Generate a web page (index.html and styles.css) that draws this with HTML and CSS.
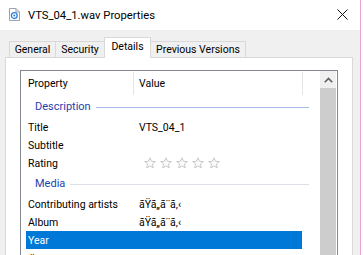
FILE: index.html
```html
<!DOCTYPE html>
<html>
<head>
<meta charset="utf-8">
<link rel="stylesheet" href="styles.css">
</head>
<body>
<div class="window">
  <div class="titlebar">
    <svg class="file-icon" width="11" height="13" viewBox="0 0 11 13">
      <path d="M0.5 0.5 H7 L10.5 4 V12.5 H0.5 Z" fill="#fff" stroke="#9aa3ad"/>
      <path d="M7 0.5 V4 H10.5" fill="none" stroke="#9aa3ad"/>
      <circle cx="5.3" cy="7.6" r="2.9" fill="none" stroke="#2f7fd8" stroke-width="1.3"/>
      <circle cx="5.3" cy="7.6" r="1" fill="#2f7fd8"/>
    </svg>
    <span class="title">VTS_04_1.wav Properties</span>
    <svg class="close" width="11" height="11" viewBox="0 0 11 11">
      <path d="M0.5 0.5 L10.5 10.5 M10.5 0.5 L0.5 10.5" stroke="#111" stroke-width="1"/>
    </svg>
  </div>
  <div class="content">
    <div class="tabs">
      <div class="tab t-general">General</div>
      <div class="tab t-security">Security</div>
      <div class="tab t-details active">Details</div>
      <div class="tab t-prev">Previous Versions</div>
    </div>
    <div class="panel">
      <div class="list">
        <div class="list-main">
          <div class="header">
            <div class="hcell h-prop">Property</div>
            <div class="hcell h-val">Value</div>
          </div>
          <div class="group"><span>Description</span><i class="rule blue"></i></div>
          <div class="row"><span class="k">Title</span><span class="v">VTS_04_1</span></div>
          <div class="row"><span class="k">Subtitle</span><span class="v"></span></div>
          <div class="row"><span class="k">Rating</span>
            <span class="v stars">
              <svg class="star" viewBox="0 0 12 12"><path d="M6 0.8 L7.5 4.3 L11.3 4.6 L8.4 7.1 L9.3 10.9 L6 8.9 L2.7 10.9 L3.6 7.1 L0.7 4.6 L4.5 4.3 Z"/></svg>
              <svg class="star" viewBox="0 0 12 12"><path d="M6 0.8 L7.5 4.3 L11.3 4.6 L8.4 7.1 L9.3 10.9 L6 8.9 L2.7 10.9 L3.6 7.1 L0.7 4.6 L4.5 4.3 Z"/></svg>
              <svg class="star" viewBox="0 0 12 12"><path d="M6 0.8 L7.5 4.3 L11.3 4.6 L8.4 7.1 L9.3 10.9 L6 8.9 L2.7 10.9 L3.6 7.1 L0.7 4.6 L4.5 4.3 Z"/></svg>
              <svg class="star" viewBox="0 0 12 12"><path d="M6 0.8 L7.5 4.3 L11.3 4.6 L8.4 7.1 L9.3 10.9 L6 8.9 L2.7 10.9 L3.6 7.1 L0.7 4.6 L4.5 4.3 Z"/></svg>
              <svg class="star" viewBox="0 0 12 12"><path d="M6 0.8 L7.5 4.3 L11.3 4.6 L8.4 7.1 L9.3 10.9 L6 8.9 L2.7 10.9 L3.6 7.1 L0.7 4.6 L4.5 4.3 Z"/></svg>
            </span>
          </div>
          <div class="group"><span>Media</span><i class="rule grey"></i></div>
          <div class="row"><span class="k">Contributing artists</span><span class="v">ãŸã„ã¨ã‚‹</span></div>
          <div class="row"><span class="k">Album</span><span class="v">ãŸã„ã¨ã‚‹</span></div>
          <div class="row selected"><span class="k">Year</span><span class="v"></span></div>
          <div class="row"><span class="k">#</span><span class="v"></span></div>
        </div>
        <div class="scrollbar">
          <div class="sb-btn">
            <svg width="9" height="6" viewBox="0 0 9 6"><path d="M0.8 5.2 L4.5 1.5 L8.2 5.2" fill="none" stroke="#606060" stroke-width="1.6"/></svg>
          </div>
          <div class="thumb"></div>
        </div>
      </div>
    </div>
  </div>
</div>
</body>
</html>
```

FILE: styles.css
```css
html, body {
  margin: 0;
  padding: 0;
}
body {
  width: 363px;
  height: 255px;
  overflow: hidden;
  background: #fff;
  font-family: Roboto, "Liberation Sans", sans-serif;
  font-size: 10.5px;
  color: #000;
}
.window {
  width: 360px;
  height: 255px;
  border-right: 1px solid #e3a6d9;
  background: #f0f0f0;
  display: flex;
  flex-direction: column;
}
.titlebar {
  height: 30px;
  flex: none;
  background: #fff;
  display: flex;
  align-items: center;
  padding-left: 9px;
}
.file-icon {
  margin-top: -2px;
}
.title {
  margin-left: 8px;
  font-size: 11.25px;
  flex: 1;
}
.close {
  margin-right: 12px;
  margin-top: -1px;
}
.content {
  flex: 1;
  display: flex;
  flex-direction: column;
  padding-top: 7px;
}
.tabs {
  display: flex;
  align-items: flex-end;
  padding-left: 9px;
  height: 20px;
  position: relative;
  z-index: 1;
}
.tab {
  box-sizing: border-box;
  height: 16px;
  border: 1px solid #d9d9d9;
  border-bottom: none;
  border-right: none;
  display: flex;
  align-items: center;
  justify-content: center;
  background: #f0f0f0;
}
.t-general { width: 46px; }
.t-security { width: 49px; }
.t-details { width: 47px; }
.t-prev { width: 95px; border-right: 1px solid #d9d9d9; }
.tab.active {
  height: 21px;
  background: #fff;
  border-right: 1px solid #d9d9d9;
  margin-bottom: -1px;
  padding-bottom: 3px;
}
.tab.active + .tab {
  border-left: none;
}
.panel {
  flex: 1;
  margin-left: 5px;
  width: 348px;
  box-sizing: border-box;
  border: 1px solid #d9d9d9;
  border-bottom: none;
  background: #fff;
  padding: 12px 0 0 14px;
}
.list {
  width: 318px;
  height: 200px;
  box-sizing: border-box;
  border: 1px solid #828790;
  border-bottom: none;
  display: flex;
}
.list-main {
  flex: 1;
}
.header {
  height: 24px;
  display: flex;
  align-items: stretch;
}
.hcell {
  box-sizing: border-box;
  display: flex;
  align-items: center;
  border-right: 1px solid #e5e5e5;
  margin: 1px 0 0;
}
.h-prop { width: 113px; padding-left: 7px; }
.h-val { width: 169px; padding-left: 5px; }
.group {
  height: 23px;
  display: flex;
  align-items: center;
  padding-left: 14px;
  color: #1e3fae;
  font-size: 11px;
}
.rule {
  flex: 1;
  height: 1px;
  margin: 1px 11px 0 5px;
}
.rule.blue { background: #a8bbe6; }
.rule.grey { background: #dcdfe8; }
.row {
  height: 18px;
  width: 276px;
  margin-left: 5px;
  display: flex;
  align-items: center;
}
.row .k {
  box-sizing: border-box;
  width: 113px;
  padding-left: 2px;
  flex: none;
}
.row .v {
  flex: 1;
}
.row.selected {
  background: #0078d7;
  color: #fff;
}
.stars {
  display: flex;
  gap: 4px;
  padding-left: 5px;
}
.star {
  width: 12px;
  height: 12px;
  fill: #fbfbfb;
  stroke: #c3c3c3;
  stroke-width: 0.9;
}
.scrollbar {
  width: 16px;
  margin-right: 1px;
  display: flex;
  flex-direction: column;
  background: #f0f0f0;
}
.sb-btn {
  height: 17px;
  display: flex;
  align-items: center;
  justify-content: center;
}
.thumb {
  flex: 1;
  background: #cdcdcd;
}
```
